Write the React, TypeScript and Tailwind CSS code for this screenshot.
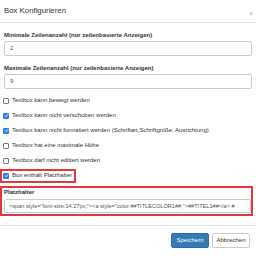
import React from "react";

const font = { fontFamily: '"Liberation Sans", Arial, sans-serif' };

function Box({ checked }: { checked: boolean }) {
  return checked ? (
    <span className="flex h-[6px] w-[6px] shrink-0 items-center justify-center rounded-[1px] bg-[#2f7fe0]">
      <svg width="5" height="5" viewBox="0 0 10 10">
        <path d="M2 5.2 L4.2 7.4 L8.2 2.6" stroke="white" strokeWidth="1.8" fill="none" />
      </svg>
    </span>
  ) : (
    <span className="h-[6px] w-[6px] shrink-0 rounded-[1px] border border-[#7a7a7a] bg-white" />
  );
}

function Row({ checked, text }: { checked: boolean; text: string }) {
  return (
    <div className="-ml-[1px] flex h-[15px] items-center gap-[3px] text-[6px] text-[#333]">
      <Box checked={checked} />
      <span>{text}</span>
    </div>
  );
}

export default function App() {
  return (
    <div className="h-[256px] w-[256px] overflow-hidden bg-white" style={font}>
      <div className="flex h-[23px] items-center justify-between border-b border-[#e5e5e5] pl-[4px] pr-[3px]">
        <span className="text-[7.8px] text-[#333]">Box Konfigurieren</span>
        <span className="mt-[5px] text-[7px] font-bold leading-none text-[#c8c8c8]">×</span>
      </div>
      <div className="px-[4px] pt-[8px]">
        <div className="mb-[2px] text-[6px] font-bold leading-[8px] text-[#333]">
          Minimale Zeilenanzahl (nur zeilenbasierte Anzeigen)
        </div>
        <div className="mb-[8px] flex h-[15px] items-center rounded-[2px] border border-[#ccc] pl-[5px] text-[6px] text-[#555]">
          2
        </div>
        <div className="mb-[2px] text-[6px] font-bold leading-[8px] text-[#333]">
          Maximale Zeilenanzahl (nur zeilenbasierte Anzeigen)
        </div>
        <div className="mb-[4px] flex h-[15px] items-center rounded-[2px] border border-[#ccc] pl-[5px] text-[6px] text-[#555]">
          9
        </div>
        <Row checked={false} text="Textbox kann bewegt werden" />
        <Row checked={true} text="Textbox kann nicht verschoben werden" />
        <Row checked={true} text="Textbox kann nicht formatiert werden (Schriftart,Schriftgröße, Ausrichtung)" />
        <Row checked={false} text="Textbox hat eine maximale Höhe" />
        <Row checked={false} text="Textbox darf nicht editiert werden" />
        <div className="flex h-[15px] items-center">
          <div className="-ml-[4px] flex h-[14px] items-center gap-[3px] border-2 border-[#e8363c] pl-[1px] pr-[2px] text-[6px] text-[#333]">
            <Box checked={true} />
            <span>Box enthält Platzhalter</span>
          </div>
        </div>
        <div className="-ml-[4px] -mr-[1px] mt-[3px] border-2 border-[#e8363c] pb-[1px] pl-[2px]">
          <div className="pt-[0px] text-[6px] font-bold leading-[8px] text-[#333]">Platzhalter</div>
          <div className="mt-[3px] flex h-[14px] items-center overflow-hidden whitespace-nowrap rounded-[2px] border border-[#ccc] pl-[4px] text-[5.6px] text-[#555]">
            {'<span style="font-size:14.27px;"><a style="color:##TITLECOLOR1##;">##TITEL1##</a> #'}
          </div>
        </div>
      </div>
      <div className="mt-[9px] flex justify-end gap-[3px] border-t border-[#e5e5e5] pr-[6px] pt-[7px]">
        <div className="flex h-[15px] w-[38px] items-center justify-center rounded-[2px] border border-[#2e6da4] bg-[#337ab7] text-[6px] text-white">
          Speichern
        </div>
        <div className="flex h-[15px] w-[38px] items-center justify-center rounded-[2px] border border-[#ccc] bg-white text-[6px] text-[#333]">
          Abbrechen
        </div>
      </div>
    </div>
  );
}
